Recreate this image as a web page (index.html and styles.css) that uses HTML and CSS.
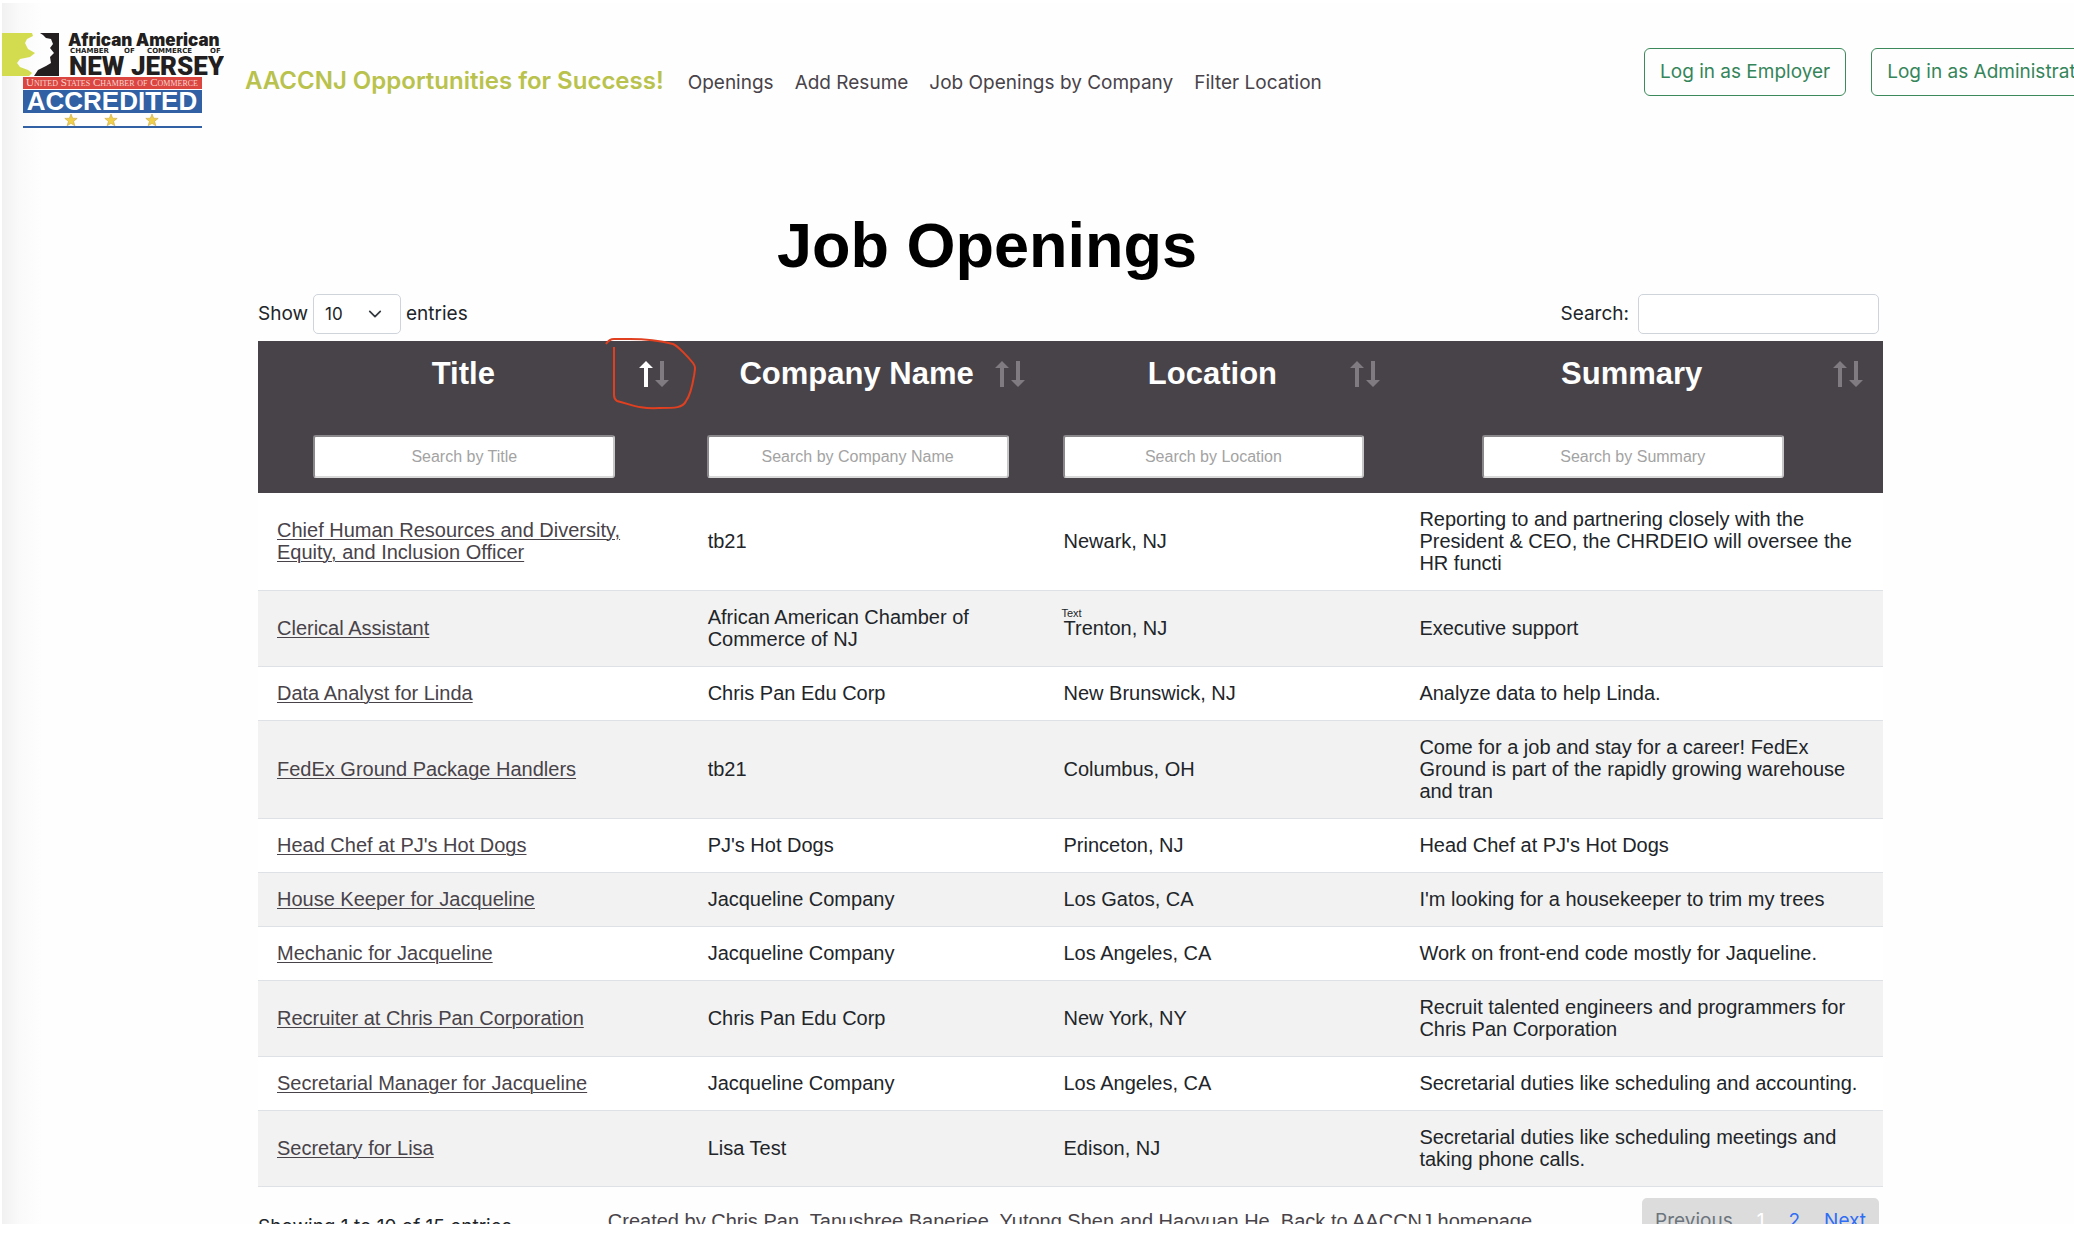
FILE: index.html
```html
<!DOCTYPE html>
<html lang="en">
<head>
<meta charset="utf-8">
<title>Job Openings</title>
<link rel="stylesheet" href="styles.css">
</head>
<body>
<svg class="symbols" aria-hidden="true">
  <symbol id="sort" viewBox="0 0 30 26">
    <path class="up" d="M7 0l7 7H9v19H5V7H0z"/>
    <path class="down" d="M23 26l-7-7h5V0h4v19h5z"/>
  </symbol>
</svg>
<div class="page">
  <header class="topbar">
    <svg class="logo" viewBox="2 30 222 100" role="img" aria-label="African American Chamber of Commerce of New Jersey">
      <path fill="#d3dc4e" d="M2 33H32L33 36L27 39L25 43L28 49L35 53L30 57L20 59L17 63L20 67L28 70L32 73L29 76H2z"/>
      <path fill="#231f20" d="M40 33H59V76H34L38 70L46 66L51 63L50 57L54 53L50 48L53 44L51 39L46 38L43 35z"/>
      <g fill="#231f20">
        <text class="logo-top" x="68" y="46">African American</text>
        <text class="logo-small" x="70" y="53">CHAMBER</text>
        <text class="logo-small" x="124" y="53">OF</text>
        <text class="logo-small" x="147" y="53">COMMERCE</text>
        <text class="logo-small" x="210" y="53">OF</text>
        <text class="logo-name" x="69" y="75">NEW JERSEY</text>
      </g>
      <path fill="#dc4640" d="M23 77h179v12H23z"/>
      <text class="logo-band" x="112" y="86">United States Chamber of Commerce</text>
      <path fill="#3160a5" d="M23 90h179v23H23zM23 126h179v2H23z"/>
      <text class="logo-accredited" x="112" y="110">ACCREDITED</text>
      <g fill="#f0cf4a" stroke="#c9a640" stroke-width=".6">
        <path id="star" d="M71 114l1.600 4.200 4.600.2-3.600 2.900 1.200 4.500-3.800-2.500-3.800 2.500 1.200-4.500-3.600-2.900 4.600-.2z"/>
        <use href="#star" x="40"/>
        <use href="#star" x="81"/>
      </g>
    </svg>
    <nav class="nav">
      <a class="brand" href="#">AACCNJ Opportunities for Success!</a>
      <a href="#">Openings</a>
      <a href="#">Add Resume</a>
      <a href="#">Job Openings by Company</a>
      <a href="#">Filter Location</a>
    </nav>
    <div class="logins">
      <button type="button">Log in as Employer</button>
      <button type="button">Log in as Administrator</button>
    </div>
  </header>

  <main class="content">
    <h1>Job Openings</h1>
    <div class="controls">
      <label class="length">Show
        <select><option>10</option><option>25</option><option>50</option></select>
        entries</label>
      <label class="filter">Search: <input type="search"></label>
    </div>

    <table>
      <colgroup><col class="c-title"><col class="c-company"><col class="c-location"><col class="c-summary"></colgroup>
      <thead>
        <tr>
          <th scope="col">
            <button type="button" class="sort asc"><span>Title</span><svg><use href="#sort"/></svg></button>
            <div class="field"><input type="text" placeholder="Search by Title" aria-label="Search by Title"></div>
            <svg class="scribble" viewBox="0 0 92 72"><path d="M1 6C3 3 5 1 9 1H25C42 1 60 4 68 6C73 8 84 20 88 25C91 29 90 31 89 38C87 50 84 59 81 63C78 70 70 70 54 70C34 71 28 67 12 63Q9 61 9 57V9"/></svg>
          </th>
          <th scope="col">
            <button type="button" class="sort"><span>Company Name</span><svg><use href="#sort"/></svg></button>
            <div class="field"><input type="text" placeholder="Search by Company Name" aria-label="Search by Company Name"></div>
          </th>
          <th scope="col">
            <button type="button" class="sort"><span>Location</span><svg><use href="#sort"/></svg></button>
            <div class="field"><input type="text" placeholder="Search by Location" aria-label="Search by Location"></div>
          </th>
          <th scope="col">
            <button type="button" class="sort"><span>Summary</span><svg><use href="#sort"/></svg></button>
            <div class="field"><input type="text" placeholder="Search by Summary" aria-label="Search by Summary"></div>
          </th>
        </tr>
      </thead>
      <tbody>
        <tr><td><a href="#">Chief Human Resources and Diversity, Equity, and Inclusion Officer</a></td><td>tb21</td><td>Newark, NJ</td><td>Reporting to and partnering closely with the President &amp; CEO, the CHRDEIO will oversee the HR functi</td></tr>
        <tr><td><a href="#">Clerical Assistant</a></td><td>African American Chamber of Commerce of NJ</td><td><span class="noted">Trenton, NJ<span class="note">Text</span></span></td><td>Executive support</td></tr>
        <tr><td><a href="#">Data Analyst for Linda</a></td><td>Chris Pan Edu Corp</td><td>New Brunswick, NJ</td><td>Analyze data to help Linda.</td></tr>
        <tr><td><a href="#">FedEx Ground Package Handlers</a></td><td>tb21</td><td>Columbus, OH</td><td>Come for a job and stay for a career! FedEx Ground is part of the rapidly growing warehouse and tran</td></tr>
        <tr><td><a href="#">Head Chef at PJ's Hot Dogs</a></td><td>PJ's Hot Dogs</td><td>Princeton, NJ</td><td>Head Chef at PJ's Hot Dogs</td></tr>
        <tr><td><a href="#">House Keeper for Jacqueline</a></td><td>Jacqueline Company</td><td>Los Gatos, CA</td><td>I'm looking for a housekeeper to trim my trees</td></tr>
        <tr><td><a href="#">Mechanic for Jacqueline</a></td><td>Jacqueline Company</td><td>Los Angeles, CA</td><td>Work on front-end code mostly for Jaqueline.</td></tr>
        <tr><td><a href="#">Recruiter at Chris Pan Corporation</a></td><td>Chris Pan Edu Corp</td><td>New York, NY</td><td>Recruit talented engineers and programmers for Chris Pan Corporation</td></tr>
        <tr><td><a href="#">Secretarial Manager for Jacqueline</a></td><td>Jacqueline Company</td><td>Los Angeles, CA</td><td>Secretarial duties like scheduling and accounting.</td></tr>
        <tr><td><a href="#">Secretary for Lisa</a></td><td>Lisa Test</td><td>Edison, NJ</td><td>Secretarial duties like scheduling meetings and taking phone calls.</td></tr>
      </tbody>
    </table>

    <div class="bottom">
      <p class="info">Showing 1 to 10 of 15 entries</p>
      <p class="credits">Created by Chris Pan, Tanushree Banerjee, Yutong Shen and Haoyuan He. <a href="#">Back to AACCNJ homepage</a></p>
      <nav class="pages" aria-label="Pages">
        <a class="off" href="#">Previous</a>
        <a class="current" href="#">1</a>
        <a href="#">2</a>
        <a href="#">Next</a>
      </nav>
    </div>
  </main>
</div>
</body>
</html>
```
FILE: styles.css
```css
* { box-sizing: border-box; }
body {
  margin: 0;
  background: #fff;
  color: #212529;
  font: 19px/28px Inter, "Liberation Sans", sans-serif;
}
a { color: #484349; text-decoration: none; }
button, input, select { font: inherit; margin: 0; }
.symbols { display: none; }
.page {
  height: calc(100vh - 23px);
  margin: 3px 0 20px 2px;
  overflow: hidden;
  background: linear-gradient(90deg, #f1f1f1, #fafafa 18px, #fefefe 40px);
}

/* Top bar */
.topbar { display: flex; align-items: flex-start; height: 206px; padding-top: 27px; }
.logo { width: 222px; height: 100px; flex: none; }
.logo-top { font: 900 17px Inter, sans-serif; }
.logo-small { font: 700 7px "DejaVu Sans", sans-serif; }
.logo-name { font: 900 26px Roboto, sans-serif; }
.logo-band { font: small-caps 11px "Liberation Serif", serif; fill: #f6d5d2; text-anchor: middle; }
.logo-accredited { font: bold 26px "Liberation Sans", sans-serif; fill: #fff; text-anchor: middle; }
.nav { display: flex; align-items: baseline; gap: 21px; margin: 37px 0 0 21px; flex: none; white-space: nowrap; }
.brand { margin-right: 3px; color: #b9c24c; font-size: 24px; font-weight: 600; }
.logins { display: flex; gap: 25px; flex: none; width: 430px; margin-left: auto; padding-top: 18px; }
.logins button {
  flex: none;
  height: 48px;
  padding: 0 15px;
  border: 1px solid #3c8a5b;
  border-radius: 6px;
  background: none;
  color: #35855a;
  white-space: nowrap;
}

/* Content */
.content { margin: 0 191px 0 256px; }
h1 { margin: 0 167px 13px 0; color: #000; font: bold 63px/72px "Liberation Sans", sans-serif; text-align: center; }
.controls { display: flex; justify-content: space-between; padding: 0 4px 7px 0; }
.length, .filter { display: flex; align-items: center; gap: 5px; height: 40px; }
.filter { gap: 9px; }
.filter input, .length select { border: 1px solid #ced4da; border-radius: 5px; background: #fff; height: 40px; }
.filter input { width: 241px; }
.length select {
  width: 88px;
  padding: 0 11px;
  color: #212529;
  font-size: 17px;
  appearance: none;
  background: #fff url("data:image/svg+xml,%3Csvg xmlns='http://www.w3.org/2000/svg' viewBox='0 0 16 16'%3E%3Cpath fill='none' stroke='%23343a40' stroke-width='2' stroke-linecap='round' stroke-linejoin='round' d='m2 5 6 6 6-6'/%3E%3C/svg%3E") no-repeat right 18px center / 14px 14px;
}

/* Table */
table { width: 100%; table-layout: fixed; border-collapse: collapse; font: 20px/22px "Liberation Sans", sans-serif; }
.c-title { width: 26.5%; }
.c-company { width: 21.9%; }
.c-location { width: 21.9%; }
.c-summary { width: 29.7%; }
th { position: relative; height: 152px; padding: 14px 18px 15px; background: #484349; vertical-align: top; font-weight: 400; }
.sort {
  display: grid;
  grid-template-columns: 1fr 30px;
  align-items: center;
  width: 100%;
  height: 38px;
  margin-bottom: 42px;
  padding: 0 2px 0 12px;
  border: 0;
  background: none;
  color: #fff;
  font: bold 31px/38px "Liberation Sans", sans-serif;
  white-space: nowrap;
}
.sort svg { width: 30px; height: 26px; fill: #7f7b80; }
.sort.asc svg { --up: #fff; }
.up { fill: var(--up, #7f7b80); }
.field { display: flex; justify-content: center; padding-right: 18px; }
.field input {
  width: 100%;
  max-width: 302px;
  height: 43px;
  border: 2px solid;
  border-color: #8b888b #c8c7c8 #d9d9d9 #8b888b;
  border-radius: 3px;
  background: #fff;
  font-size: 16px;
  text-align: center;
}
.field input::placeholder { color: #a3a3a3; }
.scribble { position: absolute; top: -3px; right: -8px; width: 92px; height: 72px; z-index: 1; fill: none; stroke: #e0401f; stroke-width: 2; pointer-events: none; }
td { padding: 15px 19px 16px; border-bottom: 1px solid #dee2e6; background: #fff; }
tbody tr:nth-child(even) td { background: #f2f2f2; }
td a { text-decoration: underline; text-decoration-thickness: 1px; text-underline-offset: 2px; }
.noted { position: relative; }
.note { position: absolute; left: -2px; top: -9px; font-size: 11px; line-height: 10px; }

/* Below the table */
.bottom { display: flex; align-items: flex-start; padding: 11px 4px 0 0; }
.bottom p { margin: 0; }
.bottom .info { flex: 1; padding-top: 15px; white-space: nowrap; }
.bottom .credits { margin-right: 110px; padding-top: 12px; color: #484349; font: 20px/22px "Liberation Sans", sans-serif; }
.pages { display: flex; gap: 24px; padding: 9px 13px; border-radius: 5px; background: #dcdcdc; }
.pages a { color: #2f6df6; }
.pages .off { color: #6c757d; }
.pages .current { color: #fff; }
```
